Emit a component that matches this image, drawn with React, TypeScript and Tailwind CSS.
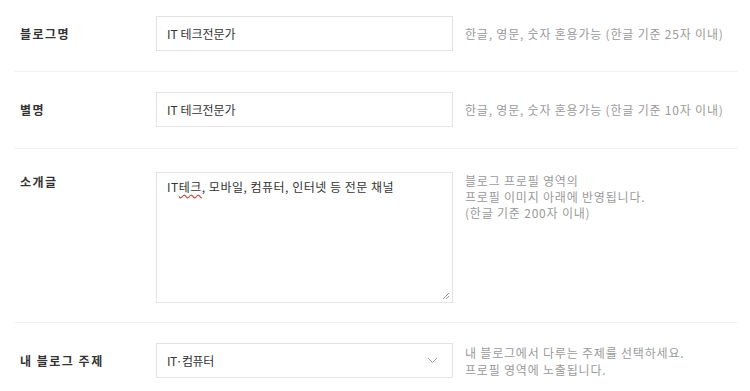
import React from 'react';

const font = { fontFamily: '"Noto Sans CJK KR", "Noto Sans", sans-serif' };

export default function App() {
  return (
    <div className="w-[750px] h-[391px] bg-white overflow-hidden" style={font}>
      <div className="ml-[15px] w-[722px]">
        {/* 블로그명 */}
        <div className="flex items-center border-b border-[#f0f0f0] pt-4 pb-5">
          <div className="w-[141px] shrink-0 pl-[5px] text-[12px] font-bold text-[#333] tracking-[1.5px]">블로그명</div>
          <div className="w-[297px] h-[35px] shrink-0 border border-[#e3e3e3] flex items-center pl-[10px] text-[12px] text-[#333]">IT 테크전문가</div>
          <div className="pl-3 text-[12px] tracking-[0.8px] text-[#9a9a9a]">한글, 영문, 숫자 혼용가능 (한글 기준 25자 이내)</div>
        </div>

        {/* 별명 */}
        <div className="flex items-center border-b border-[#f0f0f0] pt-[20px] pb-[21px]">
          <div className="w-[141px] shrink-0 pl-[5px] text-[12px] font-bold text-[#333] tracking-[1.5px]">별명</div>
          <div className="w-[297px] h-[35px] shrink-0 border border-[#e3e3e3] flex items-center pl-[10px] text-[12px] text-[#333]">IT 테크전문가</div>
          <div className="pl-3 text-[12px] tracking-[0.8px] text-[#9a9a9a]">한글, 영문, 숫자 혼용가능 (한글 기준 10자 이내)</div>
        </div>

        {/* 소개글 */}
        <div className="flex border-b border-[#f0f0f0] pt-[23px] pb-[19px]">
          <div className="w-[141px] shrink-0 pl-[5px] pt-[1px] text-[12px] font-bold text-[#333] tracking-[1.5px]">소개글</div>
          <div className="relative w-[297px] h-[131px] shrink-0 border border-[#e3e3e3] px-[10px] pt-[5px] text-[12px] leading-[18px] tracking-[0.5px] text-[#333]">
            IT<span className="underline decoration-wavy decoration-[#d04040] underline-offset-2">테크</span>, 모바일, 컴퓨터, 인터넷 등 전문 채널
            <svg className="absolute right-[2px] bottom-[2px]" width="8" height="8" viewBox="0 0 8 8">
              <path d="M7 1 L1 7 M7 4 L4 7" stroke="#999" strokeWidth="1" />
            </svg>
          </div>
          <div className="pl-3 pt-[1px] text-[12px] leading-[16px] tracking-[0.8px] text-[#9a9a9a]">
            <div>블로그 프로필 영역의</div>
            <div>프로필 이미지 아래에 반영됩니다.</div>
            <div>(한글 기준 200자 이내)</div>
          </div>
        </div>

        {/* 내 블로그 주제 */}
        <div className="flex items-center pt-[20px]">
          <div className="w-[141px] shrink-0 pl-[5px] text-[12px] font-bold text-[#333] tracking-[1.5px]">내 블로그 주제</div>
          <div className="w-[297px] h-[35px] shrink-0 border border-[#e3e3e3] flex items-center justify-between pl-[10px] pr-[14px] text-[12px] text-[#333]">
            <span className="tracking-[-0.5px]">IT·컴퓨터</span>
            <svg width="11" height="7" viewBox="0 0 11 7">
              <path d="M1 1 L5.5 5.5 L10 1" fill="none" stroke="#aaa" strokeWidth="1" />
            </svg>
          </div>
          <div className="pl-3 text-[12px] leading-[17px] tracking-[0.8px] text-[#9a9a9a]">
            <div>내 블로그에서 다루는 주제를 선택하세요.</div>
            <div>프로필 영역에 노출됩니다.</div>
          </div>
        </div>
      </div>
    </div>
  );
}
